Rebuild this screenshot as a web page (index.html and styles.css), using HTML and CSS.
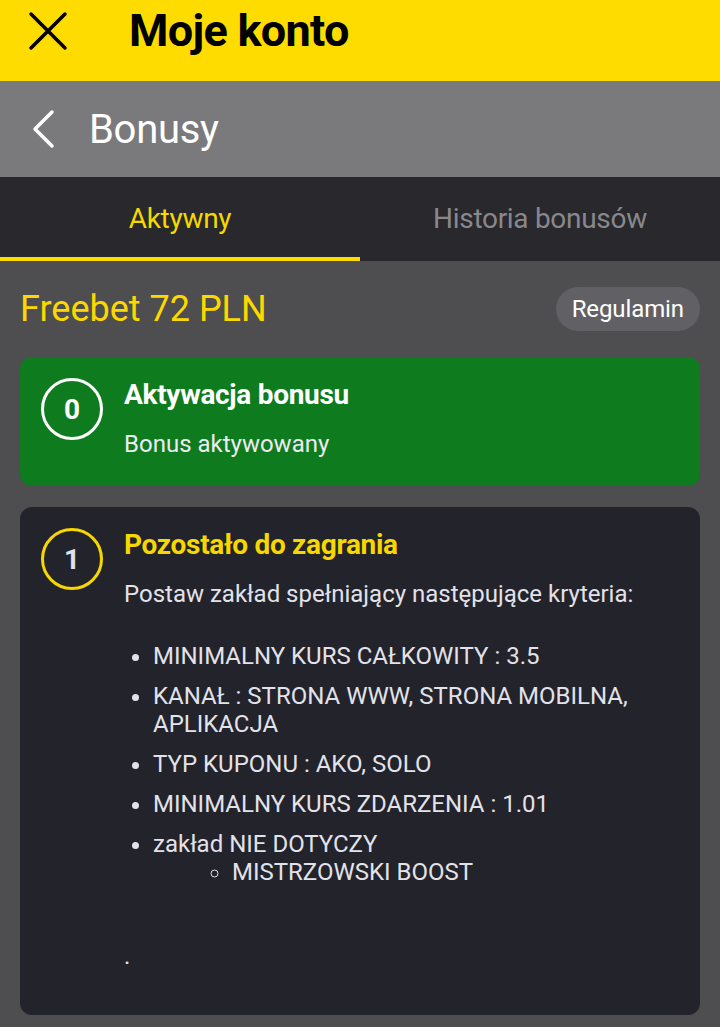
FILE: index.html
```html
<!DOCTYPE html>
<html lang="pl">
<head>
    <meta charset="UTF-8">
    <meta name="viewport" content="width=device-width, initial-scale=1.0">
    <title>Moje konto - Bonusy</title>
    <link rel="stylesheet" href="styles.css">
</head>
<body>
    <header class="top-bar">
        <svg class="close-icon" width="40" height="40" viewBox="0 0 40 40">
            <path d="M3 3 L37 37 M37 3 L3 37" stroke="#000" stroke-width="3.5" stroke-linecap="round" fill="none"/>
        </svg>
        <h1>Moje konto</h1>
    </header>

    <div class="sub-bar">
        <svg class="back-icon" width="24" height="40" viewBox="0 0 24 40">
            <path d="M21 3 L4 20 L21 37" stroke="#fff" stroke-width="3.5" stroke-linecap="round" stroke-linejoin="round" fill="none"/>
        </svg>
        <h2>Bonusy</h2>
    </div>

    <nav class="tabs">
        <div class="tab active">Aktywny</div>
        <div class="tab">Historia bonusów</div>
    </nav>

    <main class="content">
        <div class="bonus-head">
            <div class="bonus-name">Freebet 72 PLN</div>
            <button class="rules-btn">Regulamin</button>
        </div>

        <section class="step done">
            <div class="step-num">0</div>
            <div class="step-body">
                <h3>Aktywacja bonusu</h3>
                <p>Bonus aktywowany</p>
            </div>
        </section>

        <section class="step current">
            <div class="step-num">1</div>
            <div class="step-body">
                <h3>Pozostało do zagrania</h3>
                <p>Postaw zakład spełniający następujące kryteria:</p>
                <ul class="criteria">
                    <li>MINIMALNY KURS CAŁKOWITY : 3.5</li>
                    <li>KANAŁ : STRONA WWW, STRONA MOBILNA, APLIKACJA</li>
                    <li>TYP KUPONU : AKO, SOLO</li>
                    <li>MINIMALNY KURS ZDARZENIA : 1.01</li>
                    <li>zakład NIE DOTYCZY
                        <ul>
                            <li>MISTRZOWSKI BOOST</li>
                        </ul>
                    </li>
                </ul>
                <p class="end-dot">.</p>
            </div>
        </section>
    </main>
</body>
</html>
```

FILE: styles.css
```css
body {
    margin: 0;
    font-family: Roboto, "Noto Sans", sans-serif;
    background-color: #4e4e51;
    color: #fff;
}
.top-bar {
    height: 81px;
    background-color: #ffdc00;
    display: flex;
    align-items: center;
    padding-left: 28px;
    box-sizing: border-box;
}
.close-icon {
    margin-top: -20px;
}
.top-bar h1 {
    margin: -20px 0 0 61px;
    font-size: 45px;
    font-weight: bold;
    letter-spacing: -0.7px;
    color: #000;
}
.sub-bar {
    height: 96px;
    background-color: #7a7a7c;
    display: flex;
    align-items: center;
    padding-left: 31px;
    box-sizing: border-box;
}
.sub-bar h2 {
    margin: 0 0 0 34px;
    font-size: 40px;
    font-weight: normal;
    letter-spacing: -0.3px;
}
.tabs {
    display: flex;
    height: 84px;
    background-color: #29282d;
}
.tab {
    flex: 1;
    display: flex;
    align-items: center;
    justify-content: center;
    font-size: 28px;
    letter-spacing: -0.3px;
    color: #88888c;
    padding-top: 2px;
    border-bottom: 4px solid transparent;
}
.tab.active {
    color: #f5d800;
    border-bottom-color: #ffdc00;
}
.content {
    padding: 26px 20px 12px;
}
.bonus-head {
    display: flex;
    justify-content: space-between;
    align-items: center;
}
.bonus-name {
    font-size: 36px;
    color: #fcd800;
    margin-left: 0;
}
.rules-btn {
    height: 44px;
    padding: 0 16px;
    border: none;
    border-radius: 22px;
    background-color: #616165;
    color: #fff;
    font-family: inherit;
    font-size: 24px;
    letter-spacing: -0.1px;
}
.step {
    display: flex;
    gap: 21px;
    border-radius: 12px;
    padding: 21px 20px 20px 21px;
}
.step.done {
    margin-top: 26px;
    background-color: #0e7b1f;
    height: 129px;
    box-sizing: border-box;
}
.step.current {
    margin-top: 21px;
    background-color: #23232b;
    height: 508px;
    box-sizing: border-box;
}
.step-num {
    flex: none;
    width: 62px;
    height: 62px;
    box-sizing: border-box;
    border: 3px solid #fff;
    border-radius: 50%;
    display: flex;
    align-items: center;
    justify-content: center;
    font-size: 28px;
    font-weight: bold;
}
.current .step-num {
    border-color: #f7d700;
    color: #e2e2ea;
}
.step-body h3 {
    margin: 1px 0 0;
    font-size: 28px;
    line-height: 32px;
    font-weight: bold;
    letter-spacing: -0.3px;
}
.current .step-body h3 {
    color: #f7d700;
}
.step-body p {
    margin: 19px 0 0;
    font-size: 24px;
    line-height: 28px;
    color: #ececf0;
}
.current .step-body p {
    color: #e2e2ea;
}
.criteria {
    margin: 34px 0 0;
    padding-left: 29px;
    font-size: 24px;
    line-height: 28px;
    color: #e2e2ea;
}
.criteria > li {
    margin-bottom: 12px;
}
.criteria ul {
    margin: 0;
    padding-left: 79px;
    list-style-type: circle;
}
.step-body p.end-dot {
    margin-top: 56px;
}
```
